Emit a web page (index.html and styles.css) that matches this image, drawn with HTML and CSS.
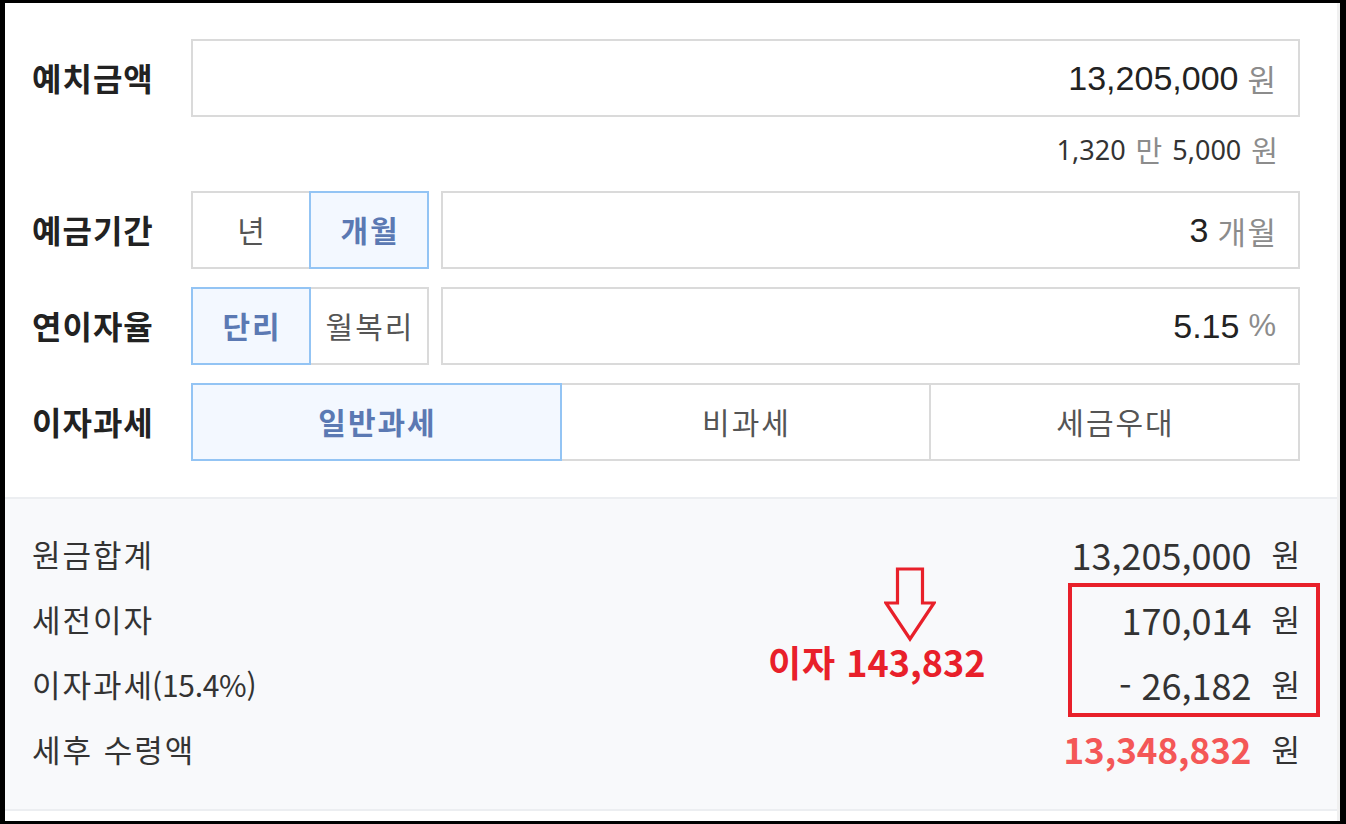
FILE: index.html
```html
<!DOCTYPE html>
<html lang="ko">
<head>
<meta charset="utf-8">
<title>예금 계산기</title>
<link rel="stylesheet" href="styles.css">
</head>
<body>
<div class="frame">
  <div class="main">
    <section class="form">
      <div class="row">
        <div class="label">예치금액</div>
        <div class="field"><span class="num">13,205,000</span><span class="unit">원</span></div>
      </div>
      <div class="hint"><span class="hn">1,320</span><span class="hu">만</span><span class="hn">5,000</span><span class="hu">원</span></div>
      <div class="row">
        <div class="label">예금기간</div>
        <div class="seg">
          <div class="opt">년</div>
          <div class="opt on">개월</div>
        </div>
        <div class="field"><span class="num">3</span><span class="unit">개월</span></div>
      </div>
      <div class="row mt">
        <div class="label">연이자율</div>
        <div class="seg">
          <div class="opt on">단리</div>
          <div class="opt">월복리</div>
        </div>
        <div class="field"><span class="num">5.15</span><span class="unit pct">%</span></div>
      </div>
      <div class="row mt">
        <div class="label">이자과세</div>
        <div class="tabs">
          <div class="opt on">일반과세</div>
          <div class="opt">비과세</div>
          <div class="opt">세금우대</div>
        </div>
      </div>
    </section>
    <section class="summary">
      <div class="srow"><span class="sl">원금합계</span><span class="val"><span class="n">13,205,000</span><span class="u">원</span></span></div>
      <div class="srow"><span class="sl">세전이자</span><span class="val"><span class="n">170,014</span><span class="u">원</span></span></div>
      <div class="srow"><span class="sl">이자과세<span class="lat">(15.4%)</span></span><span class="val"><span class="n">- 26,182</span><span class="u">원</span></span></div>
      <div class="srow"><span class="sl">세후 수령액</span><span class="val"><span class="n red">13,348,832</span><span class="u">원</span></span></div>
    </section>
    <div class="tail"></div>

    <div class="mark-box"></div>
    <svg class="mark-arrow" width="52" height="76" viewBox="0 0 52 76">
      <path d="M13.5 2 H38.5 V36 H50 L26 72 L2 36 H13.5 Z" fill="none" stroke="#e8202a" stroke-width="3.2" stroke-linejoin="miter"/>
    </svg>
    <div class="mark-text"><span class="mk">이자</span> 143,832</div>
  </div>
  <div class="strip"></div>
</div>
</body>
</html>
```

FILE: styles.css
```css
* {
  box-sizing: border-box;
  margin: 0;
  padding: 0;
}

html, body {
  width: 1346px;
  height: 824px;
  overflow: hidden;
  background: #fff;
}

body {
  font-family: "Noto Sans CJK KR", "Noto Sans", sans-serif;
  color: #222;
}

.frame {
  display: flex;
  height: 824px;
  border-style: solid;
  border-color: #000;
  border-width: 3px 6px 3px 5px;
}

.main {
  flex: 1;
  position: relative;
  display: flex;
  flex-direction: column;
}

.strip {
  width: 3px;
  background: #f0f0f0;
}

.form {
  display: flex;
  flex-direction: column;
  padding: 36px 37px 36px 27px;
}

.row {
  display: flex;
  align-items: center;
  height: 78px;
}

.row.mt {
  margin-top: 18px;
}

.label {
  width: 159px;
  flex: none;
  font-size: 32px;
  font-weight: 700;
  color: #222;
  letter-spacing: 1px;
  padding-bottom: 2px;
}

.field {
  flex: 1;
  height: 100%;
  border: 2px solid #dadada;
  display: flex;
  align-items: center;
  justify-content: flex-end;
  padding-right: 22px;
  background: #fff;
}

.num {
  font-family: "Liberation Sans", Arial, sans-serif;
  font-size: 34px;
  color: #222;
}

.unit {
  font-size: 31px;
  color: #8c8c8c;
  margin-left: 9px;
  letter-spacing: 1.5px;
  margin-right: -1.5px;
}

.unit.pct {
  font-family: "Liberation Sans", Arial, sans-serif;
  font-size: 31px;
  letter-spacing: 0;
  margin-right: 0;
}

.hint {
  height: 74px;
  display: flex;
  align-items: center;
  justify-content: flex-end;
  padding-right: 22px;
  padding-bottom: 10px;
  font-size: 27px;
}

.hn {
  font-family: "Noto Sans", sans-serif;
  color: #333;
}

.hu {
  color: #8c8c8c;
  margin: 0 10px;
  font-size: 29px;
}

.hu:last-child {
  margin-right: 0;
}

.seg {
  display: flex;
  width: 238px;
  height: 100%;
  margin-right: 12px;
  flex: none;
}

.tabs {
  display: flex;
  flex: 1;
  height: 100%;
}

.opt {
  flex: 1;
  border: 2px solid #dadada;
  display: flex;
  align-items: center;
  justify-content: center;
  font-size: 30px;
  color: #555;
  background: #fff;
  letter-spacing: 2px;
  padding-left: 2px;
  padding-bottom: 2px;
}

.opt + .opt {
  margin-left: -2px;
}

.opt.on {
  position: relative;
  z-index: 1;
  border-color: #93c4f4;
  background: #f3f8ff;
  color: #5b79b3;
  font-weight: 700;
}

.summary {
  background: #f8f9fb;
  border-top: 2px solid #eceef1;
  border-bottom: 2px solid #eceef1;
  padding: 22px 37px 28px 27px;
}

.srow {
  display: flex;
  align-items: center;
  justify-content: space-between;
  height: 65px;
}

.sl {
  font-size: 31px;
  color: #333;
  letter-spacing: 2px;
}

.sl .lat {
  letter-spacing: -0.3px;
  font-size: 30px;
  margin-left: -2px;
}

.val {
  display: flex;
  align-items: center;
}

.val .n {
  font-size: 36px;
  color: #333;
}

.val .u {
  font-size: 31px;
  color: #333;
  margin-left: 20px;
}

.val .n.red {
  color: #f45757;
  font-weight: 700;
  font-size: 35px;
}

.tail {
  flex: 1;
  background: #fff;
}

.mark-box {
  position: absolute;
  left: 1063px;
  top: 580px;
  width: 252px;
  height: 134px;
  border: 4px solid #e8202a;
}

.mark-arrow {
  position: absolute;
  left: 879px;
  top: 564px;
}

.mark-text {
  position: absolute;
  left: 763px;
  top: 632px;
  font-size: 36px;
  font-weight: 700;
  color: #e8202a;
  white-space: nowrap;
}

.mk {
  letter-spacing: 1px;
}
```
